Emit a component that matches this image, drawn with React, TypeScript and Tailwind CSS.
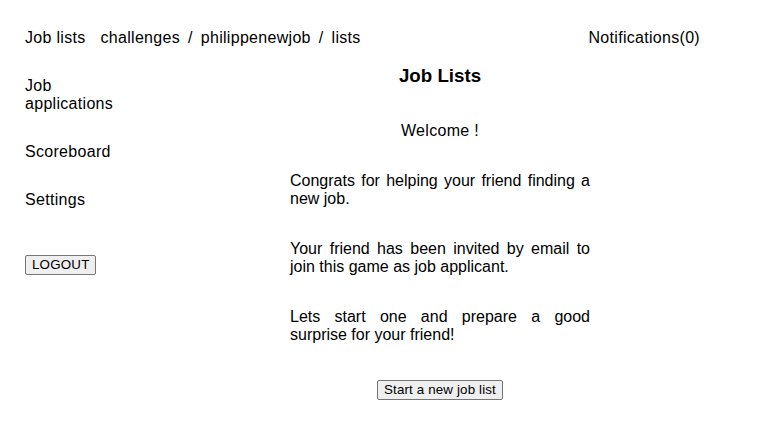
export default function App() {
  return (
    <div className="min-h-screen bg-white text-black text-[16px] leading-[18px] font-['Liberation_Sans',Arial,sans-serif]">
      {/* Top bar */}
      <div className="flex items-center pt-[29px] pl-[25px] w-[700px] tracking-[0.3px]">
        <span>Job lists</span>
        <div className="ml-[15px] flex gap-[8px]">
          <span>challenges</span>
          <span>/</span>
          <span>philippenewjob</span>
          <span>/</span>
          <span>lists</span>
        </div>
        <span className="ml-auto">Notifications(0)</span>
      </div>

      <div className="flex pl-[25px]">
        {/* Sidebar */}
        <nav className="w-[100px] pt-[30px] flex flex-col tracking-[0.3px]">
          <a className="block">Job applications</a>
          <a className="block mt-[30px]">Scoreboard</a>
          <a className="block mt-[30px]">Settings</a>
          <div className="mt-[46px]">
            <button className="px-[6px] h-[20px] text-[13.33px] leading-[16px] tracking-[0.2px] bg-[#efefef] border border-[#767676] rounded-[2px]">
              LOGOUT
            </button>
          </div>
        </nav>

        {/* Main */}
        <main className="ml-[165px] w-[300px] pt-[18px]">
          <h1 className="text-center font-bold text-[18.72px] leading-[22px]">Job Lists</h1>
          <p className="text-center mt-[35px] tracking-[0.3px]">Welcome !</p>
          <p className="text-justify mt-[32px]">Congrats for helping your friend finding a new job.</p>
          <p className="text-justify mt-[32px]">Your friend has been invited by email to join this game as job applicant.</p>
          <p className="text-justify mt-[32px]">Lets start one and prepare a good surprise for your friend!</p>
          <div className="flex justify-center mt-[36px]">
            <button className="px-[6px] h-[20px] text-[13.33px] leading-[16px] tracking-[0.15px] bg-[#efefef] border border-[#767676] rounded-[2px]">
              Start a new job list
            </button>
          </div>
        </main>
      </div>
    </div>
  );
}
